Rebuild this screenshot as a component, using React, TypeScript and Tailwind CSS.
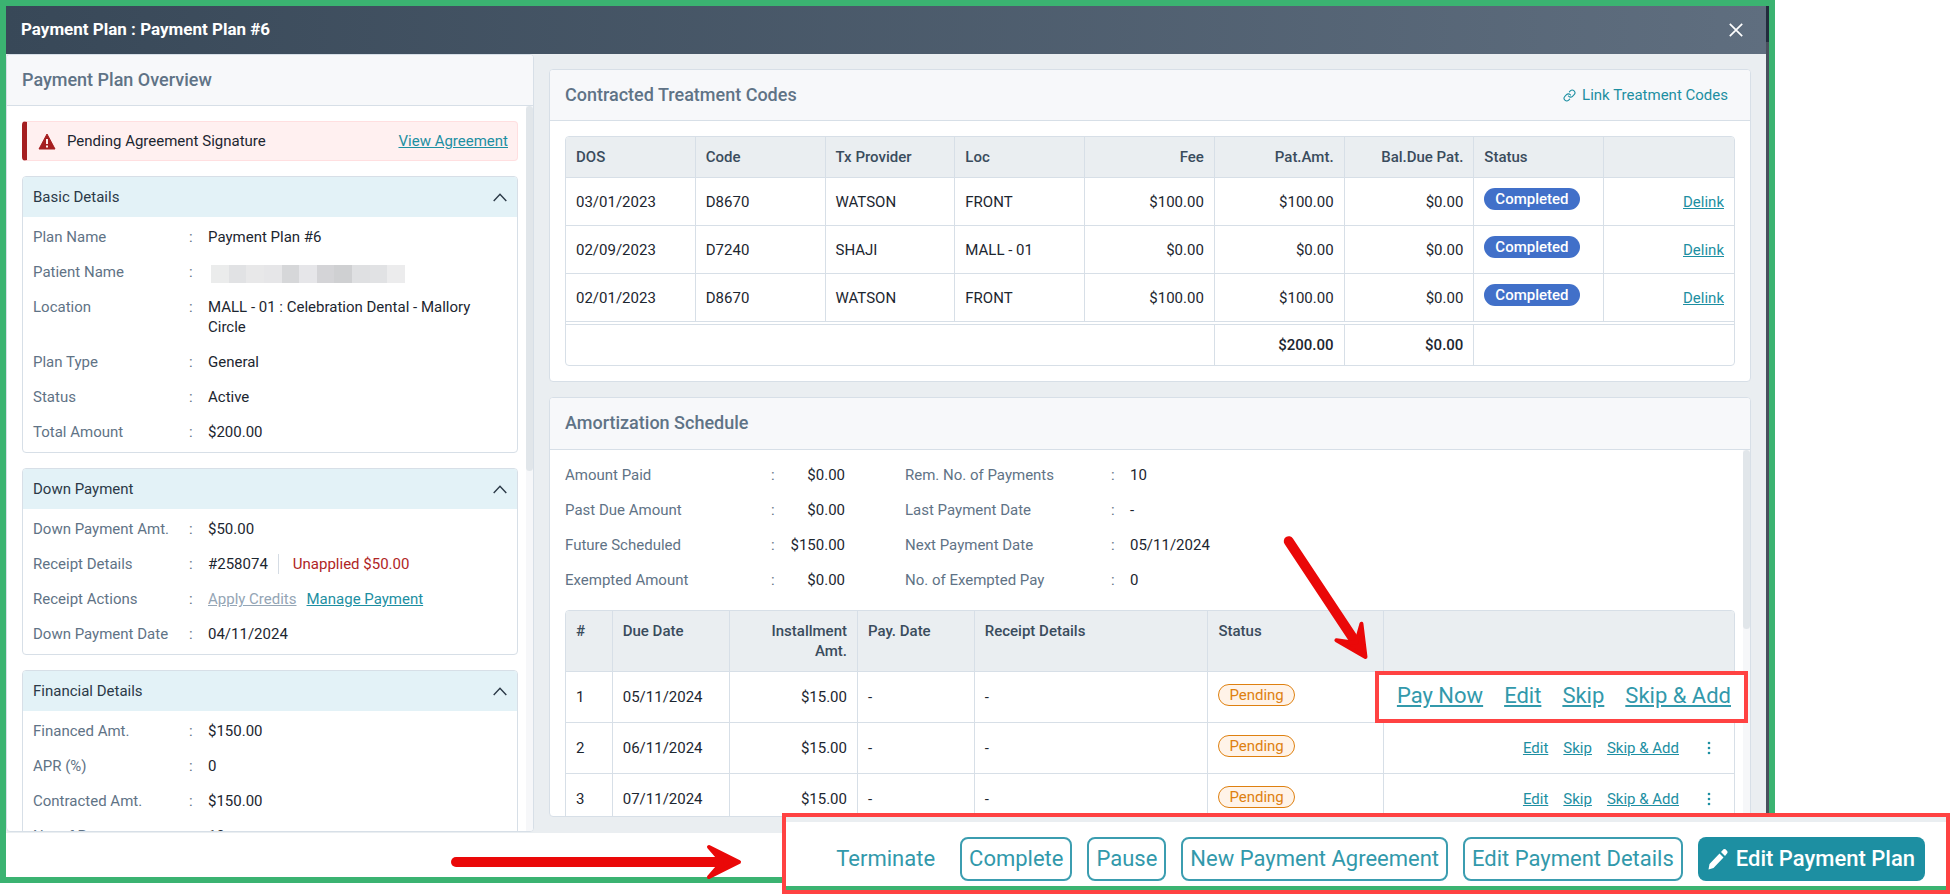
import React from 'react';
import { FiLink } from 'react-icons/fi';

interface DetailRow {
  label: string;
  value: React.ReactNode;
}

interface TreatmentCode {
  dos: string;
  code: string;
  provider: string;
  loc: string;
  fee: string;
  patAmt: string;
  balance: string;
}

const linkClass = 'text-[#1d8fa2] underline';
const outlineButton = 'h-11 rounded-lg border-2 border-[#3b9db0] px-[7px]';

const basicDetails: DetailRow[] = [
  { label: 'Plan Name', value: 'Payment Plan #6' },
  { label: 'Patient Name', value: <MaskedName /> },
  { label: 'Location', value: 'MALL - 01 : Celebration Dental - Mallory Circle' },
  { label: 'Plan Type', value: 'General' },
  { label: 'Status', value: 'Active' },
  { label: 'Total Amount', value: '$200.00' },
];

const downPayment: DetailRow[] = [
  { label: 'Down Payment Amt.', value: '$50.00' },
  {
    label: 'Receipt Details',
    value: (
      <span className="flex">
        <span>#258074</span>
        <span className="ml-2.5 border-l border-[#d5dce4] pl-3.5 text-[#b02525]">Unapplied $50.00</span>
      </span>
    ),
  },
  {
    label: 'Receipt Actions',
    value: (
      <span className="flex gap-2.5">
        <a href="#credits" className="text-[#94a5b5] underline">Apply Credits</a>
        <a href="#manage" className={linkClass}>Manage Payment</a>
      </span>
    ),
  },
  { label: 'Down Payment Date', value: '04/11/2024' },
];

const financialDetails: DetailRow[] = [
  { label: 'Financed Amt.', value: '$150.00' },
  { label: 'APR (%)', value: '0' },
  { label: 'Contracted Amt.', value: '$150.00' },
  { label: 'No. of Payments', value: '10' },
];

const treatmentCodes: TreatmentCode[] = [
  { dos: '03/01/2023', code: 'D8670', provider: 'WATSON', loc: 'FRONT', fee: '$100.00', patAmt: '$100.00', balance: '$0.00' },
  { dos: '02/09/2023', code: 'D7240', provider: 'SHAJI', loc: 'MALL - 01', fee: '$0.00', patAmt: '$0.00', balance: '$0.00' },
  { dos: '02/01/2023', code: 'D8670', provider: 'WATSON', loc: 'FRONT', fee: '$100.00', patAmt: '$100.00', balance: '$0.00' },
];

const amounts = [
  ['Amount Paid', '$0.00'],
  ['Past Due Amount', '$0.00'],
  ['Future Scheduled', '$150.00'],
  ['Exempted Amount', '$0.00'],
];

const paymentInfo = [
  ['Rem. No. of Payments', '10'],
  ['Last Payment Date', '-'],
  ['Next Payment Date', '05/11/2024'],
  ['No. of Exempted Pay', '0'],
];

const installments = ['05/11/2024', '06/11/2024', '07/11/2024'];

const maskColors = ['#ebecec', '#e1e2e4', '#e8e8e9', '#e6e6e8', '#d6d7d9', '#e6e6e9', '#d4d4d7', '#cfd0d2', '#dfe0e2', '#e1e2e4', '#ececed'];

function MaskedName() {
  return (
    <span className="flex h-5 pt-[3px] pl-[3px]">
      <span className="flex h-[18px] w-[194px]">
        {maskColors.map((color, i) => (
          <span key={i} className="flex-1" style={{ backgroundColor: color }} />
        ))}
      </span>
    </span>
  );
}

function Chevron() {
  return (
    <svg width="14" height="9" viewBox="0 0 14 9" fill="none" stroke="#2b3947" strokeWidth="1.4">
      <path d="M0.7 8 L7 1.3 L13.3 8" />
    </svg>
  );
}

function DetailCard({ title, rows }: { title: string; rows: DetailRow[] }) {
  return (
    <section className="shrink-0 overflow-hidden rounded border border-[#d7dfe7]">
      <button type="button" className="flex h-10 w-full items-center justify-between bg-[#e3f2f7] px-2.5 text-[#2b3947]">
        {title}
        <Chevron />
      </button>
      <dl className="flex flex-col gap-[15px] p-2.5">
        {rows.map((row) => (
          <div key={row.label} className="flex">
            <dt className="flex w-[175px] shrink-0 text-[#5f7386]">
              <span className="w-[156px]">{row.label}</span>:
            </dt>
            <dd className="max-w-[290px] min-w-0 text-[#1c2630]">{row.value}</dd>
          </div>
        ))}
      </dl>
    </section>
  );
}

function Scrollbar({ thumb }: { thumb: string }) {
  return (
    <div className="w-[7px] shrink-0 bg-[#f6f7f9]">
      <div className={`rounded-full bg-[#e1e6ea] ${thumb}`} />
    </div>
  );
}

function Arrow({ length }: { length: number }) {
  // drawn pointing right, with the tip at (length, 0)
  const l = length;
  return (
    <g fill="#ea0808" stroke="#ea0808" strokeLinecap="round" strokeLinejoin="round">
      <path d={`M5 0 H${l - 14}`} strokeWidth="10" />
      <path d={`M${l - 32} -15 L${l - 2} 0 L${l - 32} 15 L${l - 19} 0 Z`} strokeWidth="4" />
    </g>
  );
}

const Th = ({ children, right }: { children?: React.ReactNode; right?: boolean }) => (
  <th className={`border-r border-b border-[#d7dfe7] p-2.5 align-top font-medium last:border-r-0 ${right ? 'text-right' : 'text-left'}`}>
    {children}
  </th>
);

const Td = ({ children, right }: { children?: React.ReactNode; right?: boolean }) => (
  <td className={`border-r border-b border-[#d7dfe7] px-2.5 last:border-r-0 ${right ? 'text-right' : ''}`}>{children}</td>
);

const App: React.FC = () => {
  return (
    <div className="relative h-screen overflow-hidden bg-white pr-[175px] pb-[11px] font-['Roboto',sans-serif] text-[15px] leading-5 text-[#1c2630]">
      <div className="flex h-full border-[6px] border-[#3bb371] bg-[#48505d]">
        <div className="flex min-w-0 flex-1 flex-col bg-white">
          <header className="flex h-12 shrink-0 items-center justify-between bg-linear-to-r from-[#384858] to-[#5f6e7f] pr-[23px] pl-[15px] text-white">
            <h1 className="pb-0.5 text-[17px] leading-5 font-bold">Payment Plan : Payment Plan #6</h1>
            <button type="button" aria-label="Close">
              <svg width="14" height="14" viewBox="0 0 14 14" stroke="currentColor" strokeWidth="1.7">
                <path d="M0.8 0.8 L13.2 13.2 M13.2 0.8 L0.8 13.2" />
              </svg>
            </button>
          </header>

          <main className="flex min-h-0 flex-1 bg-[#eaeef1]">
            {/* Overview */}
            <aside className="mb-px flex w-[30%] flex-col overflow-hidden rounded border border-[#d7dfe7] bg-white">
              <h2 className="h-[51px] shrink-0 border-b border-[#d7dfe7] bg-[#f7f8fa] p-[15px] text-lg leading-5 font-medium text-[#5f7386]">
                Payment Plan Overview
              </h2>
              <div className="flex min-h-0 flex-1">
                <div className="flex min-w-0 flex-1 flex-col gap-[15px] overflow-hidden pt-[15px] pr-2 pl-[15px]">
                  <div className="flex h-10 shrink-0 items-center rounded border border-l-[5px] border-[#ffdfe0] border-l-[#a51e20] bg-[#fff0f0] pr-[9px] pl-[11px]">
                    <svg width="18" height="17" viewBox="0 0 18 17">
                      <path d="M9 1 L17 16 H1 Z" fill="#a51e20" stroke="#a51e20" strokeLinejoin="round" />
                      <path d="M8 6 H10 V11 H8 Z M8 12.5 H10 V14.5 H8 Z" fill="#fff0f0" />
                    </svg>
                    <span className="ml-[11px] flex-1">Pending Agreement Signature</span>
                    <a href="#agreement" className={linkClass}>View Agreement</a>
                  </div>
                  <DetailCard title="Basic Details" rows={basicDetails} />
                  <DetailCard title="Down Payment" rows={downPayment} />
                  <DetailCard title="Financial Details" rows={financialDetails} />
                </div>
                <Scrollbar thumb="h-[365px]" />
              </div>
            </aside>

            <div className="flex min-w-0 flex-1 flex-col gap-[15px] p-[15px] pb-4">
              {/* Treatment codes */}
              <section className="shrink-0 overflow-hidden rounded border border-[#d7dfe7] bg-white">
                <div className="flex h-[51px] items-center justify-between border-b border-[#d7dfe7] bg-[#f7f8fa] pr-[22px] pl-[15px]">
                  <h2 className="text-lg leading-5 font-medium text-[#5f7386]">Contracted Treatment Codes</h2>
                  <button type="button" className="flex items-center gap-1.5 text-[#1d8fa2]">
                    <FiLink size={13} />
                    Link Treatment Codes
                  </button>
                </div>
                <div className="p-[15px]">
                  <div className="overflow-hidden rounded border border-[#d7dfe7]">
                    <table className="w-full table-fixed border-separate border-spacing-0">
                      <thead className="bg-[#eaeef1] text-[#3a4c5d]">
                        <tr>
                          <Th>DOS</Th>
                          <Th>Code</Th>
                          <Th>Tx Provider</Th>
                          <Th>Loc</Th>
                          <Th right>Fee</Th>
                          <Th right>Pat.Amt.</Th>
                          <Th right>Bal.Due Pat.</Th>
                          <Th>Status</Th>
                          <Th />
                        </tr>
                      </thead>
                      <tbody>
                        {treatmentCodes.map((row) => (
                          <tr key={row.dos} className="h-12">
                            <Td>{row.dos}</Td>
                            <Td>{row.code}</Td>
                            <Td>{row.provider}</Td>
                            <Td>{row.loc}</Td>
                            <Td right>{row.fee}</Td>
                            <Td right>{row.patAmt}</Td>
                            <Td right>{row.balance}</Td>
                            <Td>
                              <span className="mb-[5px] flex h-[22px] w-fit items-center rounded-full bg-[#4170c9] px-[11px] font-medium text-white">
                                Completed
                              </span>
                            </Td>
                            <Td right>
                              <a href="#delink" className={linkClass}>Delink</a>
                            </Td>
                          </tr>
                        ))}
                      </tbody>
                      <tfoot className="font-medium">
                        <tr className="h-0.5">
                          <td colSpan={9} />
                        </tr>
                        <tr className="h-[41px] text-right">
                          <td colSpan={5} className="border-t border-r border-[#d7dfe7]" />
                          <td className="border-t border-r border-[#d7dfe7] px-2.5">$200.00</td>
                          <td className="border-t border-r border-[#d7dfe7] px-2.5">$0.00</td>
                          <td colSpan={2} className="border-t border-[#d7dfe7]" />
                        </tr>
                      </tfoot>
                    </table>
                  </div>
                </div>
              </section>

              {/* Amortization */}
              <section className="flex min-h-0 flex-1 flex-col overflow-hidden rounded border border-[#d7dfe7] bg-white">
                <h2 className="h-[52px] shrink-0 border-b border-[#d7dfe7] bg-[#f7f8fa] p-[15px] text-lg leading-5 font-medium text-[#5f7386]">
                  Amortization Schedule
                </h2>
                <div className="flex min-h-0 flex-1">
                  <div className="min-w-0 flex-1 overflow-hidden pt-[15px] pr-2 pl-[15px]">
                    <div className="mb-5 flex gap-[60px]">
                      <dl className="flex w-[280px] flex-col gap-[15px]">
                        {amounts.map(([label, value]) => (
                          <div key={label} className="flex">
                            <dt className="flex text-[#5f7386]">
                              <span className="w-[206px]">{label}</span>:
                            </dt>
                            <dd className="flex-1 text-right">{value}</dd>
                          </div>
                        ))}
                      </dl>
                      <dl className="flex flex-col gap-[15px]">
                        {paymentInfo.map(([label, value]) => (
                          <div key={label} className="flex">
                            <dt className="flex w-[225px] text-[#5f7386]">
                              <span className="w-[206px]">{label}</span>:
                            </dt>
                            <dd>{value}</dd>
                          </div>
                        ))}
                      </dl>
                    </div>

                    <div className="overflow-hidden rounded border border-[#d7dfe7]">
                      <table className="w-full table-fixed border-separate border-spacing-0">
                        <colgroup>
                          <col className="w-[4%]" />
                          <col className="w-[10%]" />
                          <col className="w-[11%]" />
                          <col className="w-[10%]" />
                          <col className="w-[20%]" />
                          <col className="w-[15%]" />
                          <col className="w-[30%]" />
                        </colgroup>
                        <thead className="bg-[#eaeef1] text-[#3a4c5d]">
                          <tr>
                            <Th>#</Th>
                            <Th>Due Date</Th>
                            <Th right>Installment Amt.</Th>
                            <Th>Pay. Date</Th>
                            <Th>Receipt Details</Th>
                            <Th>Status</Th>
                            <Th />
                          </tr>
                        </thead>
                        <tbody>
                          {installments.map((dueDate, i) => (
                            <tr key={dueDate} className="h-[51px]">
                              <Td>{i + 1}</Td>
                              <Td>{dueDate}</Td>
                              <Td right>$15.00</Td>
                              <Td>-</Td>
                              <Td>-</Td>
                              <Td>
                                <span className="mb-[5px] flex h-[22px] w-fit items-center rounded-full border border-[#de8010] bg-[#fff3e8] px-2.5 text-[#de8010]">
                                  Pending
                                </span>
                              </Td>
                              <Td>
                                {i > 0 && (
                                  <div className="flex items-center justify-end gap-[15px] pr-3">
                                    <a href="#edit" className={linkClass}>Edit</a>
                                    <a href="#skip" className={linkClass}>Skip</a>
                                    <a href="#skip-add" className={linkClass}>Skip &amp; Add</a>
                                    <button type="button" aria-label="More" className="ml-3">
                                      <svg width="6" height="14" viewBox="0 0 6 14" fill="#1d8fa2">
                                        <circle cx="3" cy="2" r="1.3" />
                                        <circle cx="3" cy="7" r="1.3" />
                                        <circle cx="3" cy="12" r="1.3" />
                                      </svg>
                                    </button>
                                  </div>
                                )}
                              </Td>
                            </tr>
                          ))}
                        </tbody>
                      </table>
                    </div>
                  </div>
                  <Scrollbar thumb="h-[179px]" />
                </div>
              </section>
            </div>
          </main>

          <div className="h-11 shrink-0" />
        </div>
        {/* Page behind the dialog */}
        <div className="w-[3px] shrink-0">
          <div className="h-9 bg-[#222c3c]" />
        </div>
      </div>

      {/* Enlarged row actions */}
      <div className="absolute top-[671px] right-[202px] flex h-[52px] w-[373px] items-center justify-end gap-[21px] border-4 border-[#ff4242] bg-white pr-[13px] pb-0.5 text-[22px] leading-6">
        <a href="#pay" className="text-[#3299ab] underline">Pay Now</a>
        <a href="#edit" className="text-[#3299ab] underline">Edit</a>
        <a href="#skip" className="text-[#3299ab] underline">Skip</a>
        <a href="#skip-add" className="text-[#3299ab] underline">Skip &amp; Add</a>
      </div>

      {/* Enlarged footer */}
      <footer className="absolute right-0 bottom-0 flex h-[81px] w-[1168px] flex-col border-4 border-[#ff4242] bg-white">
        <div className="h-[5px] shrink-0 bg-[#eaeef1]" />
        <div className="flex flex-1 items-center justify-end gap-[15px] pt-2.5 pr-[21px] text-[22px] leading-6 text-[#3299ab]">
          <button type="button" className="mr-2.5">Terminate</button>
          <button type="button" className={outlineButton}>Complete</button>
          <button type="button" className={outlineButton}>Pause</button>
          <button type="button" className={outlineButton}>New Payment Agreement</button>
          <button type="button" className={outlineButton}>Edit Payment Details</button>
          <button type="button" className="flex h-11 items-center gap-2 rounded-lg bg-[#1d8fa2] px-2.5 font-medium text-white">
            <svg width="20" height="22" viewBox="0 0 20 22" fill="currentColor">
              <path d="M0.5 21.5 L1.5 16 L11.5 5.5 L15.5 9.5 L5.5 20 Z M13 4 L15.5 1.3 Q16.5 0.5 17.5 1.3 L19.3 3.2 Q20 4.2 19.2 5.3 L17 8 Z" />
            </svg>
            Edit Payment Plan
          </button>
        </div>
        <div className="h-1 shrink-0 bg-[#3bb371]" />
      </footer>

      <svg className="pointer-events-none absolute top-0 right-0" width="1950" height="894" viewBox="0 0 1950 894">
        <g transform="translate(451 862)">
          <Arrow length={290} />
        </g>
        <g transform="translate(1286 537) rotate(56.5)">
          <Arrow length={146} />
        </g>
      </svg>
    </div>
  );
};

export default App;
